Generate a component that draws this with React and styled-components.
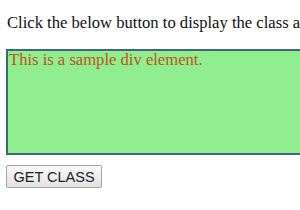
import styled, { createGlobalStyle } from 'styled-components';

const GlobalStyle = createGlobalStyle`
	html, body {
		margin: 0;
		background: #fff;
		overflow: hidden;
	}
	body {
		font-family: "Liberation Serif", "Times New Roman", serif;
	}
`;

const Page = styled.div`
	display: flex;
	flex-direction: column;
	align-items: flex-start;
	padding: 13px 0 0 6px;
	width: 340px;
`;

const Intro = styled.p`
	margin: 0 0 17px 1px;
	font-size: 16.6px;
	line-height: 19px;
	color: #111;
	white-space: nowrap;
`;

const SampleBox = styled.div`
	box-sizing: border-box;
	width: 320px;
	height: 106px;
	padding: 0 0 0 1px;
	background-color: #90ee90;
	border: 2px solid #3d6a78;
	color: #c0531c;
	font-size: 16.6px;
	line-height: 17px;
`;

const Button = styled.button`
	margin-top: 10px;
	width: 96px;
	height: 23px;
	padding: 0;
	font-family: "Liberation Sans", Arial, sans-serif;
	font-size: 14.5px;
	color: #222;
	background: linear-gradient(#fafafa, #e2e2e2);
	border: 1px solid #a5a5a5;
	border-radius: 2px;
`;

const App = () => {
	return (
		<Page>
			<GlobalStyle />
			<Intro>Click the below button to display the class attribute</Intro>
			<SampleBox>This is a sample div element.</SampleBox>
			<Button>GET CLASS</Button>
		</Page>
	);
};

export default App;
